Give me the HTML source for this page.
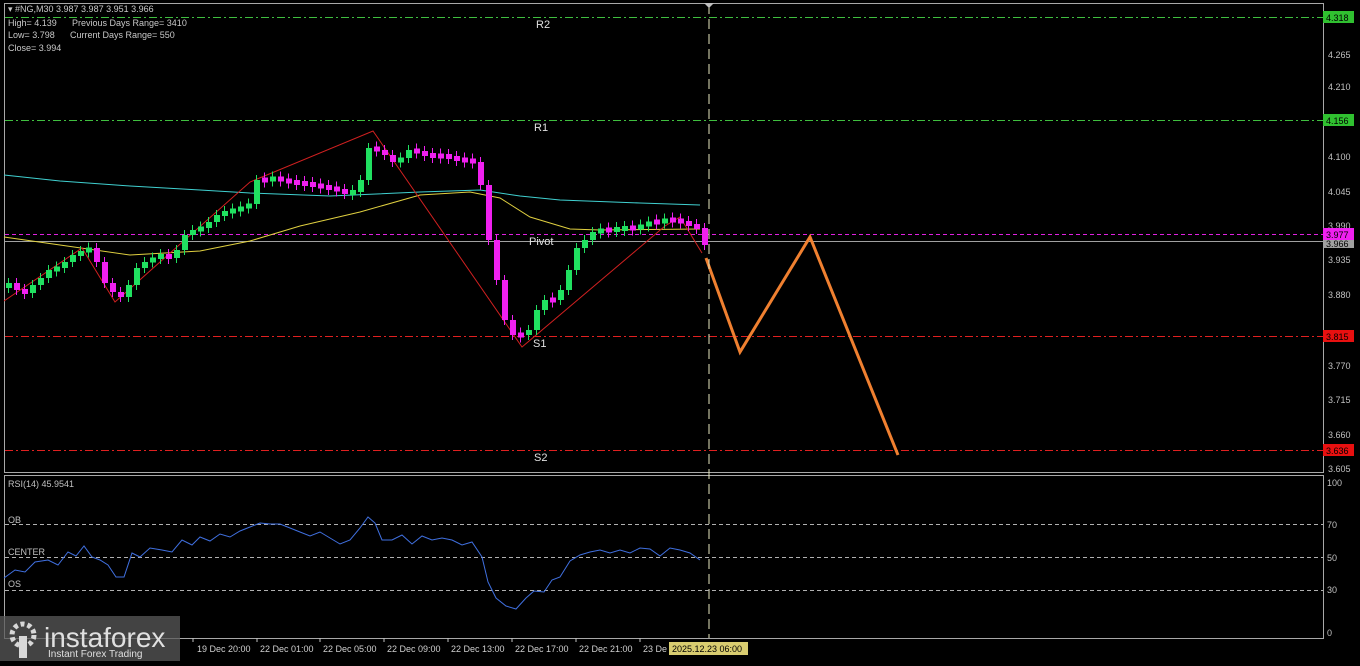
<!DOCTYPE html>
<html><head><meta charset="utf-8"><style>
body{margin:0;background:#000;width:1360px;height:661px;overflow:hidden;font-family:"Liberation Sans",sans-serif}
svg text{font-family:"Liberation Sans",sans-serif}
</style></head><body>
<svg id="s" width="1360" height="661" xmlns="http://www.w3.org/2000/svg">
<rect width="1360" height="661" fill="#000"/>
<rect x="4.5" y="3.5" width="1319" height="469" fill="none" stroke="#a8a8a8"/>
<rect x="4.5" y="475.5" width="1319" height="163" fill="none" stroke="#a8a8a8"/>
<line x1="5" y1="17.5" x2="1323" y2="17.5" stroke="#3fbf3f" stroke-dasharray="8,3,2,3"/>
<line x1="5" y1="120.5" x2="1323" y2="120.5" stroke="#3fbf3f" stroke-dasharray="8,3,2,3"/>
<line x1="5" y1="234.5" x2="1323" y2="234.5" stroke="#e020e0" stroke-dasharray="4,3"/>
<line x1="5" y1="241.5" x2="1323" y2="241.5" stroke="#a0a0a0"/>
<line x1="5" y1="336.5" x2="1323" y2="336.5" stroke="#e02020" stroke-dasharray="8,3,2,3"/>
<line x1="5" y1="450.5" x2="1323" y2="450.5" stroke="#e02020" stroke-dasharray="8,3,2,3"/>
<g fill="#e0e0e0" font-size="11">
<text x="536" y="28">R2</text><text x="534" y="131">R1</text><text x="529" y="245">Pivot</text>
<text x="533" y="347">S1</text><text x="534" y="461">S2</text></g>
<polyline fill="none" stroke="#40d0d0" stroke-width="1" points="4,175 60,181 130,186 200,190 250,193 330,196 420,192 480,190 520,196 560,200 640,203 700,205"/>
<polyline fill="none" stroke="#e0d040" stroke-width="1" points="4,237 60,245 130,255 200,251 250,241 300,226 360,212 420,195 470,192 500,198 530,217 570,229 600,230 700,229"/>
<polyline fill="none" stroke="#d02020" stroke-width="1" points="4,301 82,248 115,302 250,182 373,131 522,347 665,226 680,217 702,253"/>
<g id="c"></g>
<polyline fill="none" stroke="#f08030" stroke-width="3" points="706,258 740,352 810,237 898,455"/>
<line x1="709" y1="4" x2="709" y2="638" stroke="#e8e8c0" stroke-dasharray="10,5"/>
<polygon points="709,8 704,3 714,3" fill="#c0c0c0"/>
<g fill="#c8c8c8" font-size="9">
<text x="8" y="12">▾ #NG,M30  3.987 3.987 3.951 3.966</text>
<text x="8" y="26">High= 4.139</text><text x="72" y="26">Previous Days Range= 3410</text>
<text x="8" y="38">Low= 3.798</text><text x="70" y="38">Current Days Range= 550</text>
<text x="8" y="51">Close= 3.994</text>
</g>
<g fill="#c0c0c0" font-size="9">
<text x="1328" y="58">4.265</text><text x="1328" y="90">4.210</text><text x="1328" y="160">4.100</text>
<text x="1328" y="195">4.045</text><text x="1328" y="229">3.990</text><text x="1328" y="263">3.935</text>
<text x="1328" y="298">3.880</text><text x="1328" y="369">3.770</text><text x="1328" y="403">3.715</text>
<text x="1328" y="438">3.660</text><text x="1328" y="472">3.605</text>
<text x="1327" y="486">100</text><text x="1327" y="528">70</text><text x="1327" y="561">50</text>
<text x="1327" y="593">30</text><text x="1327" y="636">0</text>
</g>
<rect x="1323" y="11" width="31" height="12" fill="#30c030"/><text x="1326" y="21" font-size="9" fill="#000">4.318</text>
<rect x="1323" y="114" width="31" height="12" fill="#30c030"/><text x="1326" y="124" font-size="9" fill="#000">4.156</text>
<rect x="1323" y="240" width="31" height="8" fill="#a0a0a0"/><text x="1326" y="247" font-size="9" fill="#000">3.966</text>
<rect x="1323" y="228" width="31" height="12" fill="#f020f0"/><text x="1326" y="238" font-size="9" fill="#000">3.977</text>
<rect x="1323" y="330" width="31" height="12" fill="#e81010"/><text x="1326" y="340" font-size="9" fill="#000">3.815</text>
<rect x="1323" y="444" width="31" height="12" fill="#e81010"/><text x="1326" y="454" font-size="9" fill="#000">3.636</text>
<g stroke="#b0b0b0" stroke-dasharray="4,3">
<line x1="5" y1="524.5" x2="1323" y2="524.5"/><line x1="5" y1="557.5" x2="1323" y2="557.5"/><line x1="5" y1="590.5" x2="1323" y2="590.5"/></g>
<g fill="#c0c0c0" font-size="9"><text x="8" y="487">RSI(14) 45.9541</text><text x="8" y="523">OB</text><text x="8" y="555">CENTER</text><text x="8" y="587">OS</text></g>
<polyline fill="none" stroke="#4070e0" stroke-width="1" points="4,578 15,570 25,572 35,562 48,560 58,565 68,552 76,556 84,546 92,557 100,560 108,565 116,577 124,577 132,553 140,557 150,548 162,550 172,552 182,540 192,545 200,537 210,541 220,534 230,537 240,531 250,527 260,523 270,524 280,524 290,528 300,532 310,536 320,532 330,538 340,544 350,540 360,528 368,517 375,523 382,540 392,540 402,535 412,544 422,536 432,540 442,538 452,540 462,545 472,542 482,557 488,582 496,598 506,606 516,609 526,598 534,591 544,592 552,580 560,577 570,561 580,555 590,552 600,550 610,553 620,550 630,553 640,548 650,549 660,556 670,548 680,550 690,553 700,560"/>
<g fill="#d0d0d0" font-size="9">
<text x="197" y="652">19 Dec 20:00</text><text x="260" y="652">22 Dec 01:00</text><text x="323" y="652">22 Dec 05:00</text>
<text x="387" y="652">22 Dec 09:00</text><text x="451" y="652">22 Dec 13:00</text><text x="515" y="652">22 Dec 17:00</text>
<text x="579" y="652">22 Dec 21:00</text><text x="643" y="652">23 De</text></g>
<g stroke="#c0c0c0"><line x1="193" y1="638" x2="193" y2="642"/><line x1="257" y1="638" x2="257" y2="642"/><line x1="320" y1="638" x2="320" y2="642"/><line x1="384" y1="638" x2="384" y2="642"/><line x1="448" y1="638" x2="448" y2="642"/><line x1="512" y1="638" x2="512" y2="642"/><line x1="576" y1="638" x2="576" y2="642"/><line x1="640" y1="638" x2="640" y2="642"/></g>
<rect x="669" y="642" width="79" height="13" fill="#d8cc70"/><text x="672" y="652" font-size="9" fill="#000">2025.12.23 06:00</text>
<rect x="0" y="616" width="180" height="45" fill="#5a5a5a" opacity="0.75"/>
<g fill="#d8d8d8"><circle cx="23" cy="635" r="11" fill="none" stroke="#d8d8d8" stroke-width="5" stroke-dasharray="4,3"/><rect x="19" y="636" width="8" height="22"/></g>
<text x="44" y="647" font-size="28" fill="#e0e0e0">instaforex</text>
<text x="48" y="657" font-size="10" fill="#e0e0e0">Instant Forex Trading</text>
</svg>
<script>
var ys=[283,290,293,285,278,270,268,262,255,252,248,262,283,292,297,285,268,262,258,255,258,250,235,230,228,222,215,212,210,208,204,180,180,178,180,182,183,184,185,187,188,190,193,192,180,148,150,155,162,158,150,152,155,156,156,157,160,160,162,185,240,280,320,335,335,330,310,300,300,290,270,248,240,232,230,230,229,228,228,226,222,222,220,220,222,225,228,245];
var g=document.getElementById('c'),h='',p=ys[0]+5;
for(var i=0;i<ys.length;i++){var x=8+8*i,o=p,c=ys[i],t=Math.min(o,c),b=Math.max(o,c),col=c<o?'#20e060':'#f020f0';if(b-t<5){var m=(t+b)/2;t=m-2.5;b=m+2.5;}
h+='<line x1="'+(x+0.5)+'" y1="'+(t-5)+'" x2="'+(x+0.5)+'" y2="'+(b+5)+'" stroke="'+col+'"/><rect x="'+(x-2)+'" y="'+t+'" width="6" height="'+(b-t)+'" fill="'+col+'"/>';p=c;}
g.innerHTML=h;
</script>
</body></html>
